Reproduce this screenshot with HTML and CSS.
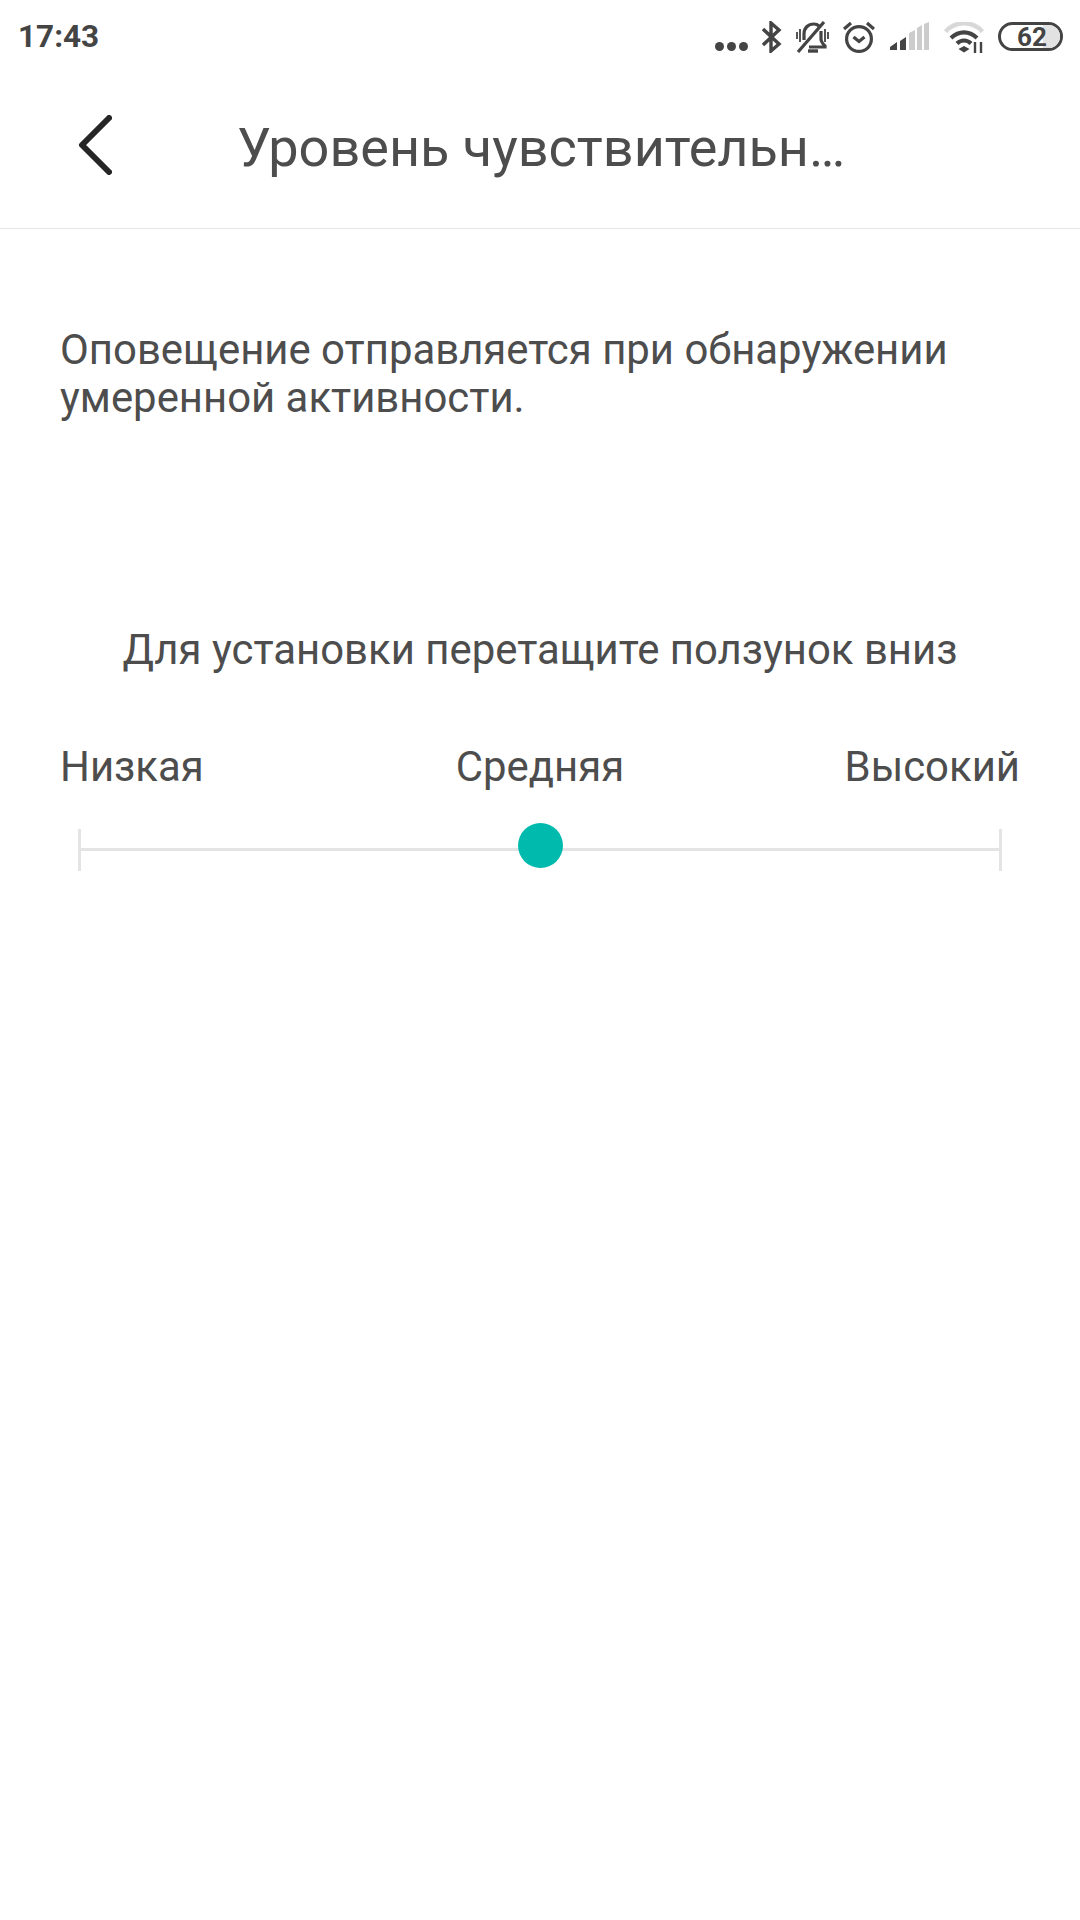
FILE: index.html
```html
<!DOCTYPE html>
<html lang="ru">
  <head>
    <meta charset="UTF-8" />
    <meta name="viewport" content="width=device-width, initial-scale=1.0" />
    <title>Уровень чувствительности</title>
    <link rel="stylesheet" href="styles.css">
  </head>
  <body>
    <div class="status-bar">
      <span class="time">17:43</span>
      <div class="status-icons">
        <svg class="ic-dots" width="33" height="9" viewBox="0 0 33 9"><circle cx="4.5" cy="4.5" r="4.5"/><circle cx="16.5" cy="4.5" r="4.5"/><circle cx="28.5" cy="4.5" r="4.5"/></svg>
        <svg class="ic-bt" width="20" height="32" viewBox="0 0 20 32"><path d="M1 8l16 15-8 7V2l8 7L1 24" fill="none" stroke-width="3.4"/></svg>
        <svg class="ic-bell" width="33" height="32" viewBox="0 0 33 32">
          <path d="M8 19V13C8 7 12 3 18 3c2 0 4 1 5 2M25 10v8c0 3 2 5 4 7v1H13" fill="none" stroke-width="3.2"/>
          <path d="M12 30h10" stroke-width="3.4"/>
          <path d="M1 11v7M4 8v13M29 8v13M32 11v7" stroke-width="1.8"/>
          <path d="M2 31L28 1" stroke-width="3.2"/>
        </svg>
        <svg class="ic-alarm" width="32" height="32" viewBox="0 0 32 32">
          <circle cx="16" cy="18" r="12.4" fill="none" stroke-width="3.2"/>
          <path d="M10.5 16l5.5 4.5 5.5-4.5" fill="none" stroke-width="3.2"/>
          <path d="M1 8l7-6M31 8l-7-6" stroke-width="3.2"/>
        </svg>
        <svg class="ic-signal" width="39" height="28" viewBox="0 0 39 28">
          <path class="off" d="M19 12c0-1 1-2 2-2l4-2v20h-6zM27 6l5-3v25h-5zM34 2l5-2v28h-5z"/>
          <path d="M0 28v-3l7-5v8zM10 28v-9l6-4v13z"/>
        </svg>
        <svg class="ic-wifi" width="40" height="31" viewBox="0 0 40 31">
          <path class="off-line" d="M1.5 9.5c10-11 27-11 37 0" fill="none" stroke-width="4.4"/>
          <path d="M7 16c8-7.5 18-7.500 26 0M13 21.500c4-4 10-4 14 0" fill="none" stroke-width="4.2"/>
          <path d="M14.500 27l5.500-3 5.500 3-5.500 3.500z"/>
          <path d="M31 20v11M37 20v11" stroke-width="2.400"/>
        </svg>
        <div class="battery">
          <div class="battery-level"></div>
          <span class="battery-num">62</span>
        </div>
      </div>
    </div>

    <header class="top-bar">
      <svg class="back" width="34" height="60" viewBox="0 0 34 60"><path d="M31 3L4 30l27 27" fill="none" stroke-width="6" stroke-linecap="round" stroke-linejoin="round"/></svg>
      <h1>Уровень чувствительн…</h1>
    </header>

    <p class="desc">Оповещение отправляется при обнаружении умеренной активности.</p>

    <p class="hint">Для установки перетащите ползунок вниз</p>

    <div class="levels">
      <span>Низкая</span>
      <span>Средняя</span>
      <span class="level-high">Высокий</span>
    </div>

    <!-- ползунок -->
    <div class="slider">
      <div class="track"></div>
      <div class="thumb"></div>
    </div>
  </body>
</html>
```

FILE: styles.css
```css
body {
  margin: 0;
  height: 1920px;
  overflow: hidden;
  font-family: Roboto, sans-serif;
  background-color: #fff;
  color: #4d4d4d;
}

.status-bar {
  display: flex;
  justify-content: space-between;
  align-items: center;
  height: 72px;
  padding: 0 17px 0 18px;
}

.time {
  font-size: 31.5px;
  font-weight: 700;
  color: #444;
}

.status-icons {
  display: flex;
  align-items: center;
  gap: 14px;
}

.status-icons svg {
  fill: #444;
  stroke: #444;
  stroke-width: 0;
}

.status-icons .off {
  fill: #ccc;
  stroke: none;
}

.status-icons .off-line {
  stroke: #d8d8d8;
}

.ic-dots {
  margin-top: 20px;
}

.ic-bt,
.ic-bell,
.ic-alarm,
.ic-wifi {
  margin-top: 2px;
}

.ic-signal {
  margin-left: 1px;
  margin-top: -1px;
}

.ic-wifi {
  margin-left: 1px;
}

.battery {
  position: relative;
  box-sizing: border-box;
  width: 65px;
  height: 29px;
  border: 3px solid #444;
  border-radius: 15px;
}

.battery-level {
  position: absolute;
  top: 0;
  right: 0;
  bottom: 0;
  width: 17px;
  border-radius: 0 12px 12px 0;
  background-color: #e2e2e2;
}

.battery-num {
  position: absolute;
  top: -3px;
  left: 16px;
  font-size: 26px;
  line-height: 30px;
  font-weight: 700;
  color: #444;
}

.top-bar {
  display: flex;
  align-items: center;
  height: 157px;
  box-sizing: border-box;
  border-bottom: 1px solid #e6e6e6;
  padding: 0 0 5px 78px;
}

.back {
  stroke: #262626;
  margin-top: -6px;
}

h1 {
  margin: 0 0 0 125px;
  font-size: 54px;
  font-weight: 400;
}

.desc {
  margin: 97px 60px 0;
  font-size: 41.9px;
  line-height: 48px;
}

.hint {
  margin: 204px 0 0;
  font-size: 41.9px;
  line-height: 48px;
  text-align: center;
}

.levels {
  display: grid;
  grid-template-columns: 1fr auto 1fr;
  margin: 68px 60px 0;
  font-size: 41.9px;
  line-height: 50px;
}

.level-high {
  text-align: right;
}

.slider {
  position: relative;
  height: 42px;
  margin: 37px 78px 0;
  padding-top: 19px;
  box-sizing: border-box;
  border-left: 3px solid #e4e4e4;
  border-right: 3px solid #e4e4e4;
}

.track {
  height: 3px;
  background-color: #e4e4e4;
}

.thumb {
  position: absolute;
  top: -6px;
  left: 50%;
  width: 45px;
  height: 45px;
  margin-left: -22.5px;
  border-radius: 50%;
  background-color: #00baad;
}
```
